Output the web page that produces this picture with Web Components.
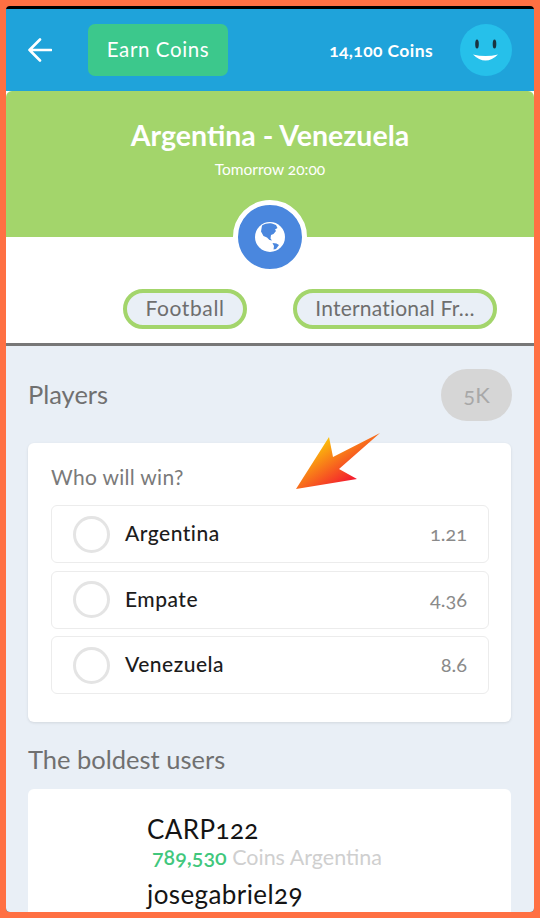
<!DOCTYPE html>
<html>
<head>
<meta charset="utf-8">
<title>Argentina - Venezuela</title>
<style>
  html, body { margin: 0; padding: 0; background: #ff7043; }
  body { font-family: Lato, "Open Sans", sans-serif; font-feature-settings: "onum"; }
</style>
</head>
<body>
<app-frame>
  <top-bar coins="14,100 Coins"></top-bar>
  <match-hero title="Argentina - Venezuela" when="Tomorrow 20:00">
    <tag-chip style="width:124px">Football</tag-chip>
    <tag-chip style="width:204px;letter-spacing:.2px">International Fr…</tag-chip>
  </match-hero>
  <page-body>
    <section-head count="5K">Players</section-head>
    <bet-card question="Who will win?">
      <bet-option odds="1.21">Argentina</bet-option>
      <bet-option odds="4.36">Empate</bet-option>
      <bet-option odds="8.6">Venezuela</bet-option>
      <svg slot="overlay" width="86" height="60" viewBox="0 0 86 60">
        <defs>
          <linearGradient id="arrow" gradientUnits="userSpaceOnUse" x1="34" y1="5" x2="62" y2="47">
            <stop offset="0" stop-color="#fbc00a"/>
            <stop offset="1" stop-color="#f4152f"/>
          </linearGradient>
        </defs>
        <path d="M1 57 34 5 38 25 85 1 44 37 62 47Z" fill="url(#arrow)"/>
      </svg>
    </bet-card>
    <section-head>The boldest users</section-head>
    <users-card>
      <user-row name="CARP122" amount="789,530" note="Coins Argentina"></user-row>
      <user-row name="josegabriel29"></user-row>
    </users-card>
  </page-body>
</app-frame>

<script>
  class AppFrame extends HTMLElement {
    constructor() {
      super();
      this.attachShadow({ mode: 'open' });
      this.shadowRoot.innerHTML = `
        <style>
          :host {
            display: flex;
            flex-direction: column;
            box-sizing: border-box;
            width: 540px;
            height: 918px;
            border: 6px solid #ff7043;
            border-radius: 10px;
            overflow: hidden;
            background: #000;
            padding-top: 3px;
          }
        </style>
        <slot></slot>
      `;
    }
  }

  class TopBar extends HTMLElement {
    constructor() {
      super();
      this.attachShadow({ mode: 'open' });
    }
    connectedCallback() {
      this.shadowRoot.innerHTML = `
        <style>
          :host {
            display: flex;
            align-items: center;
            flex: none;
            height: 82px;
            box-sizing: border-box;
            padding: 0 22px;
            background: #1fa3da;
            color: #fff;
          }
          .back { display: block; flex: none; margin-right: 36px; }
          .earn {
            flex: none;
            width: 140px;
            height: 52px;
            box-sizing: border-box;
            padding-bottom: 3px;
            border-radius: 7px;
            background: #3cc88c;
            display: flex;
            align-items: center;
            justify-content: center;
            font-size: 20.500px;
            letter-spacing: .6px;
          }
          .coins {
            margin-left: auto;
            margin-right: 27px;
            margin-top: 1px;
            font-size: 17.500px;
            font-weight: 700;
            letter-spacing: .4px;
          }
          .face { display: block; flex: none; }
        </style>
        <svg class="back" width="24" height="24" viewBox="0 0 24 24" fill="none" stroke="#fff" stroke-width="2.600" stroke-linecap="round" stroke-linejoin="round">
          <path d="M1.500 12H23M12 1.500 1.500 12 12 22.500"/>
        </svg>
        <div class="earn">Earn Coins</div>
        <div class="coins">${this.getAttribute('coins')}</div>
        <svg class="face" width="52" height="52" viewBox="0 0 52 52">
          <circle cx="26" cy="26" r="26" fill="#26c0ea"/>
          <ellipse cx="17" cy="20" rx="1.800" ry="4.500" fill="#1a3340"/>
          <ellipse cx="34.500" cy="20" rx="1.800" ry="4.500" fill="#1a3340"/>
          <path d="M13 30.500Q25.500 33.500 38 30.500Q32 36.500 25.500 36.500Q19 36.500 13 30.500Z" fill="#fff"/>
        </svg>
      `;
    }
  }

  class MatchHero extends HTMLElement {
    constructor() {
      super();
      this.attachShadow({ mode: 'open' });
    }
    connectedCallback() {
      this.shadowRoot.innerHTML = `
        <style>
          :host {
            display: block;
            flex: none;
            position: relative;
            height: 252px;
            background: #fff;
            border-bottom: 3px solid #777;
          }
          .top {
            height: 146px;
            box-sizing: border-box;
            padding-top: 28px;
            background: #a3d56b;
            border-radius: 6px 6px 0 0;
            color: #fff;
            text-align: center;
          }
          h1 { margin: 0; font-size: 28.500px; line-height: 32px; font-weight: 700; }
          p { margin: 9px 0 0; font-size: 15.500px; line-height: 18px; }
          .badge {
            position: absolute;
            left: 227px;
            top: 109px;
            width: 74px;
            height: 74px;
            box-sizing: border-box;
            border: 5px solid #fff;
            border-radius: 50%;
            background: #4a87de;
            display: flex;
            align-items: center;
            justify-content: center;
          }
          .chips {
            display: flex;
            gap: 46px;
            padding: 52px 0 0 117px;
          }
        </style>
        <div class="top">
          <h1>${this.getAttribute('title')}</h1>
          <p>${this.getAttribute('when')}</p>
        </div>
        <div class="badge">
          <svg width="30" height="30" viewBox="0 0 30 30">
            <circle cx="15" cy="15" r="15" fill="#fff"/>
            <path d="M7 3.500C10 1.500 14 .8 17 1.500L21 3 22.500 6 20 7.500 21 9 18.500 12 16 13 15.500 16.500 17 18.500 14.500 18 12 15.500 8.500 14 6 9.500Z" fill="#4a87de"/>
            <path d="M17.500 21 21.500 21.500 24 23 21 27 18.500 27.500 19 24Z" fill="#4a87de"/>
          </svg>
        </div>
        <div class="chips"><slot></slot></div>
      `;
    }
  }

  class TagChip extends HTMLElement {
    constructor() {
      super();
      this.attachShadow({ mode: 'open' });
      this.shadowRoot.innerHTML = `
        <style>
          :host {
            display: flex;
            align-items: center;
            justify-content: center;
            box-sizing: border-box;
            height: 40px;
            padding-bottom: 3px;
            border: 4px solid #a3d56b;
            border-radius: 20px;
            background: #e9eff6;
            color: #6e6e6e;
            font-size: 21px;
            letter-spacing: .6px;
            white-space: nowrap;
          }
        </style>
        <slot></slot>
      `;
    }
  }

  class PageBody extends HTMLElement {
    constructor() {
      super();
      this.attachShadow({ mode: 'open' });
      this.shadowRoot.innerHTML = `
        <style>
          :host {
            display: block;
            flex: 1;
            min-height: 0;
            box-sizing: border-box;
            padding: 23px 22px 0;
            background: #e9eff6;
          }
        </style>
        <slot></slot>
      `;
    }
  }

  class SectionHead extends HTMLElement {
    constructor() {
      super();
      this.attachShadow({ mode: 'open' });
    }
    connectedCallback() {
      const count = this.getAttribute('count');
      this.shadowRoot.innerHTML = `
        <style>
          :host {
            display: flex;
            align-items: center;
            justify-content: space-between;
            height: ${count ? 52 : 30}px;
            margin-bottom: ${count ? 22 : 14}px;
            color: #707070;
            font-size: 25.500px;
          }
          .label { margin-bottom: ${count ? 3 : 2}px; }
          .count {
            width: 71px;
            height: 52px;
            border-radius: 26px;
            background: #d6d6d6;
            color: #a8a8a8;
            font-size: 22px;
            padding-bottom: 2px;
            box-sizing: border-box;
            display: flex;
            align-items: center;
            justify-content: center;
          }
        </style>
        <span class="label"><slot></slot></span>
        ${count ? `<div class="count">${count}</div>` : ''}
      `;
    }
  }

  class BetCard extends HTMLElement {
    constructor() {
      super();
      this.attachShadow({ mode: 'open' });
    }
    connectedCallback() {
      this.shadowRoot.innerHTML = `
        <style>
          :host {
            display: block;
            position: relative;
            height: 279px;
            box-sizing: border-box;
            padding: 22px 22px 0 23px;
            margin: 0 1px 23px 0;
            background: #fff;
            border-radius: 6px;
            box-shadow: 0 1px 3px rgba(0,0,0,.1);
          }
          .q { color: #7a7a7a; font-size: 21px; line-height: 24px; margin-bottom: 16px; letter-spacing: .3px; }
          .list { display: flex; flex-direction: column; gap: 7.500px; }
          .over { position: absolute; left: 267px; top: -11px; line-height: 0; }
        </style>
        <div class="q">${this.getAttribute('question')}</div>
        <div class="list"><slot></slot></div>
        <div class="over"><slot name="overlay"></slot></div>
      `;
    }
  }

  class BetOption extends HTMLElement {
    constructor() {
      super();
      this.attachShadow({ mode: 'open' });
    }
    connectedCallback() {
      this.shadowRoot.innerHTML = `
        <style>
          :host {
            display: flex;
            align-items: center;
            box-sizing: border-box;
            height: 58px;
            padding: 0 21px;
            border: 1.500px solid #ececec;
            border-radius: 6px;
            color: #1c1c1c;
            font-size: 21px;
            font-weight: 500;
            letter-spacing: .5px;
          }
          .dot {
            flex: none;
            width: 37px;
            height: 37px;
            box-sizing: border-box;
            border: 3px solid #e4e4e4;
            border-radius: 50%;
            margin-right: 15px;
          }
          .label { margin-bottom: 3px; }
          .odds { margin-left: auto; margin-bottom: 2px; color: #8a8a8a; font-size: 20px; font-weight: 400; letter-spacing: 0; }
        </style>
        <span class="dot"></span>
        <span class="label"><slot></slot></span>
        <span class="odds">${this.getAttribute('odds')}</span>
      `;
    }
  }

  class UsersCard extends HTMLElement {
    constructor() {
      super();
      this.attachShadow({ mode: 'open' });
      this.shadowRoot.innerHTML = `
        <style>
          :host {
            display: block;
            box-sizing: border-box;
            height: 200px;
            margin-right: 1px;
            padding: 24px 0 0 119px;
            background: #fff;
            border-radius: 6px;
          }
        </style>
        <slot></slot>
      `;
    }
  }

  class UserRow extends HTMLElement {
    constructor() {
      super();
      this.attachShadow({ mode: 'open' });
    }
    connectedCallback() {
      const amount = this.getAttribute('amount');
      this.shadowRoot.innerHTML = `
        <style>
          :host { display: block; margin-bottom: 9px; }
          .name { color: #141414; font-size: 26px; line-height: 32px; letter-spacing: .4px; }
          .sub { padding-left: 5px; color: #cfcfcf; font-size: 21.500px; line-height: 24px; }
          b { color: #41c77c; font-weight: 600; }
        </style>
        <div class="name">${this.getAttribute('name')}</div>
        ${amount ? `<div class="sub"><b>${amount}</b> ${this.getAttribute('note')}</div>` : ''}
      `;
    }
  }

  customElements.define('app-frame', AppFrame);
  customElements.define('top-bar', TopBar);
  customElements.define('match-hero', MatchHero);
  customElements.define('tag-chip', TagChip);
  customElements.define('page-body', PageBody);
  customElements.define('section-head', SectionHead);
  customElements.define('bet-card', BetCard);
  customElements.define('bet-option', BetOption);
  customElements.define('users-card', UsersCard);
  customElements.define('user-row', UserRow);
</script>
</body>
</html>
